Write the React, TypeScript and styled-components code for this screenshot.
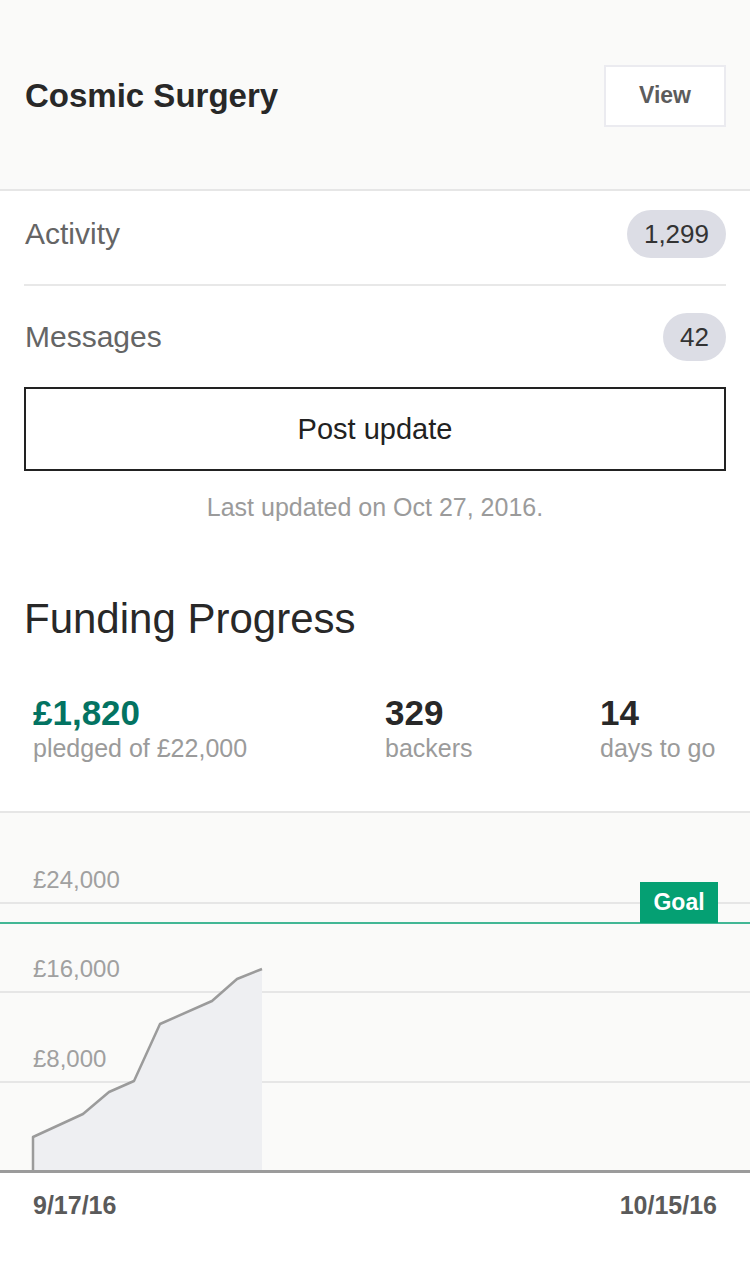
import styled, { createGlobalStyle } from 'styled-components'

const GlobalStyle = createGlobalStyle`
  html, body {
    margin: 0;
    padding: 0;
    background: #ffffff;
  }
  body {
    font-family: 'Liberation Sans', Arial, sans-serif;
    color: #282828;
  }
`

const Page = styled.div`
  width: 750px;
  min-height: 1279px;
  background: #ffffff;
`

const Header = styled.header`
  height: 191px;
  box-sizing: border-box;
  padding: 2px 24px 0 25px;
  background: #fafaf9;
  border-bottom: 2px solid #e6e6e6;
  display: flex;
  align-items: center;
  justify-content: space-between;
`

const Title = styled.h1`
  margin: 0;
  font-size: 33px;
  font-weight: 700;
  color: #282828;
`

const ViewButton = styled.button`
  width: 122px;
  height: 62px;
  box-sizing: border-box;
  background: #ffffff;
  border: 2px solid #ebebf0;
  font-family: inherit;
  font-size: 23px;
  font-weight: 700;
  color: #5c5c5c;
  padding: 0;
`

const Row = styled.div<{ $top: number; $bottom: number }>`
  display: flex;
  align-items: center;
  justify-content: space-between;
  margin: 0 24px 0 25px;
  padding: ${(p) => p.$top}px 0 ${(p) => p.$bottom}px;
`

const Divider = styled.div`
  height: 2px;
  margin: 0 24px;
  background: #e8e8e8;
`

const RowLabel = styled.span`
  font-size: 30px;
  color: #656565;
`

const Count = styled.span`
  height: 48px;
  box-sizing: border-box;
  padding: 0 17px;
  border-radius: 24px;
  background: #dcdde5;
  display: flex;
  align-items: center;
  font-size: 26px;
  color: #333333;
`

const PostButton = styled.button`
  display: block;
  width: 702px;
  height: 84px;
  margin: 0 24px;
  box-sizing: border-box;
  background: #ffffff;
  border: 2px solid #222222;
  font-family: inherit;
  font-size: 29px;
  color: #222222;
`

const Updated = styled.p`
  margin: 22px 0 0;
  line-height: 28px;
  text-align: center;
  font-size: 25px;
  color: #9b9b9b;
`

const Heading = styled.h2`
  margin: 74px 0 0 24px;
  line-height: 48px;
  font-size: 42px;
  font-weight: 400;
  color: #282828;
`

const Stats = styled.div`
  display: grid;
  grid-template-columns: 352px 215px 1fr;
  padding: 50px 0 48px 33px;
  border-bottom: 2px solid #e6e6e6;
`

const Stat = styled.div`
  display: flex;
  flex-direction: column;
`

const StatValue = styled.span<{ $accent?: boolean }>`
  font-size: 35px;
  line-height: 40px;
  font-weight: 700;
  color: ${(p) => (p.$accent ? '#037362' : '#282828')};
`

const StatLabel = styled.span`
  font-size: 25px;
  line-height: 30px;
  color: #9b9b9b;
`

const Chart = styled.div`
  position: relative;
  height: 357px;
  background: #fafaf9;
  border-bottom: 3px solid #9b9b9b;
`

const Plot = styled.svg`
  display: block;
`

const AxisLabel = styled.span<{ $top: number }>`
  position: absolute;
  left: 33px;
  top: ${(p) => p.$top}px;
  font-size: 24px;
  line-height: 28px;
  color: #a0a0a0;
`

const GoalTag = styled.span`
  position: absolute;
  left: 640px;
  top: 69px;
  width: 78px;
  height: 41px;
  background: #05a073;
  color: #ffffff;
  font-size: 23px;
  font-weight: 700;
  display: flex;
  align-items: center;
  justify-content: center;
`

const Dates = styled.div`
  display: flex;
  justify-content: space-between;
  padding: 17px 33px 0;
  font-size: 25px;
  line-height: 30px;
  font-weight: 700;
  color: #5a5a5a;
`

const points: [number, number][] = [
  [33, 324],
  [83, 301],
  [109, 279],
  [134, 268],
  [160, 211],
  [212, 188],
  [237, 166],
  [262, 156],
]

const grid = [
  { y: 89, label: '£24,000' },
  { y: 178, label: '£16,000' },
  { y: 268, label: '£8,000' },
]

export default function App() {
  const line = `33,357 ` + points.map((p) => p.join(',')).join(' ')
  const area = `${line} 262,357`

  return (
    <>
      <GlobalStyle />
      <Page>
        <Header>
          <Title>Cosmic Surgery</Title>
          <ViewButton>View</ViewButton>
        </Header>

        <Row $top={19} $bottom={26}>
          <RowLabel>Activity</RowLabel>
          <Count>1,299</Count>
        </Row>
        <Divider />
        <Row $top={27} $bottom={26}>
          <RowLabel>Messages</RowLabel>
          <Count>42</Count>
        </Row>

        <PostButton>Post update</PostButton>
        <Updated>Last updated on Oct 27, 2016.</Updated>

        <Heading>Funding Progress</Heading>

        <Stats>
          <Stat>
            <StatValue $accent>£1,820</StatValue>
            <StatLabel>pledged of £22,000</StatLabel>
          </Stat>
          <Stat>
            <StatValue>329</StatValue>
            <StatLabel>backers</StatLabel>
          </Stat>
          <Stat>
            <StatValue>14</StatValue>
            <StatLabel>days to go</StatLabel>
          </Stat>
        </Stats>

        <Chart>
          <Plot width="750" height="357" viewBox="0 0 750 357">
            {grid.map((g) => (
              <line key={g.y} x1="0" x2="750" y1={g.y + 1} y2={g.y + 1} stroke="#e6e6e6" strokeWidth="2" />
            ))}
            <line x1="0" x2="750" y1="110" y2="110" stroke="#05a073" strokeWidth="1.5" />
            <polygon points={area} fill="#eeeff2" />
            <polyline points={line} fill="none" stroke="#9b9b9b" strokeWidth="2.5" strokeLinejoin="round" />
          </Plot>
          {grid.map((g) => (
            <AxisLabel key={g.label} $top={g.y - 36}>
              {g.label}
            </AxisLabel>
          ))}
          <GoalTag>Goal</GoalTag>
        </Chart>

        <Dates>
          <span>9/17/16</span>
          <span>10/15/16</span>
        </Dates>
      </Page>
    </>
  )
}
